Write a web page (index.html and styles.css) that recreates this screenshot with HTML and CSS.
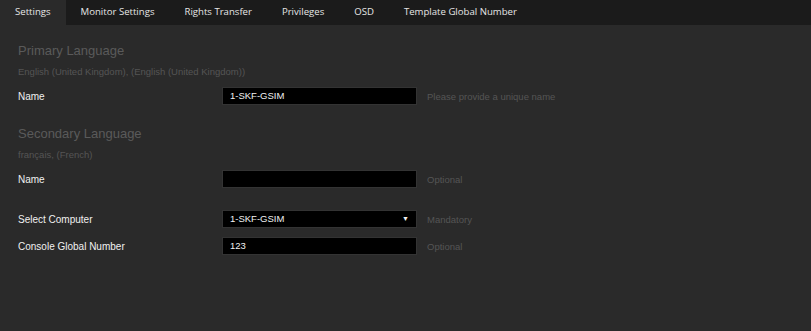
FILE: index.html
```html
<!DOCTYPE html>
<html lang="en">
<head>
  <meta charset="UTF-8" />
  <title>Console Settings</title>
  <link rel="stylesheet" href="styles.css">
</head>
<body>
  <nav class="tabs">
    <span class="tab active">Settings</span>
    <span class="tab">Monitor Settings</span>
    <span class="tab">Rights Transfer</span>
    <span class="tab">Privileges</span>
    <span class="tab">OSD</span>
    <span class="tab">Template Global Number</span>
  </nav>

  <main>
    <section class="lang">
      <div class="lang-title">Primary Language</div>
      <div class="lang-note">English (United Kingdom), (English (United Kingdom))</div>
      <div class="row">
        <label>Name</label>
        <div class="field">1-SKF-GSIM</div>
        <span class="hint">Please provide a unique name</span>
      </div>
    </section>

    <section class="lang">
      <div class="lang-title">Secondary Language</div>
      <div class="lang-note">français, (French)</div>
      <div class="row">
        <label>Name</label>
        <div class="field"></div>
        <span class="hint">Optional</span>
      </div>
    </section>

    <section class="extra">
      <div class="row">
        <label>Select Computer</label>
        <div class="field select">1-SKF-GSIM <span class="caret">&#9660;</span></div>
        <span class="hint">Mandatory</span>
      </div>
      <div class="row">
        <label>Console Global Number</label>
        <div class="field">123</div>
        <span class="hint">Optional</span>
      </div>
    </section>
  </main>
</body>
</html>
```

FILE: styles.css
```css
* {
  box-sizing: border-box;
}
html, body {
  height: 100%;
}
body {
  margin: 0;
  background-color: #2a2a2a;
  color: #dddddd;
  font-family: 'Liberation Sans', Arial, sans-serif;
  font-size: 9.5px;
}
.tabs {
  display: flex;
  height: 25px;
  background-color: #1b1b1b;
}
.tab {
  padding: 0 15px;
  line-height: 24px;
  font-family: 'Open Sans', sans-serif;
  font-size: 9.6px;
  color: #e6e6e6;
}
.tab.active {
  background-color: #2a2a2a;
}
main {
  padding: 18px 18px;
}
.lang-title {
  font-size: 13px;
  line-height: 15px;
  color: #5a5a5a;
  margin-bottom: 8px;
}
.lang-note {
  line-height: 11px;
  color: #555555;
  margin-bottom: 10px;
}
.lang + .lang {
  margin-top: 21px;
}
.extra {
  margin-top: 22px;
}
.row {
  display: flex;
  align-items: center;
  height: 18px;
}
.row + .row {
  margin-top: 9px;
}
.row label {
  width: 204px;
  font-size: 10px;
  color: #f0f0f0;
}
.field {
  width: 195px;
  height: 18px;
  padding: 0 7px;
  line-height: 16px;
  background-color: #000;
  border: 1px solid #333;
  color: #f2f2f2;
}
.select {
  display: flex;
  justify-content: space-between;
}
.caret {
  font-size: 7px;
}
.hint {
  margin-left: 10px;
  color: #555555;
}
```
